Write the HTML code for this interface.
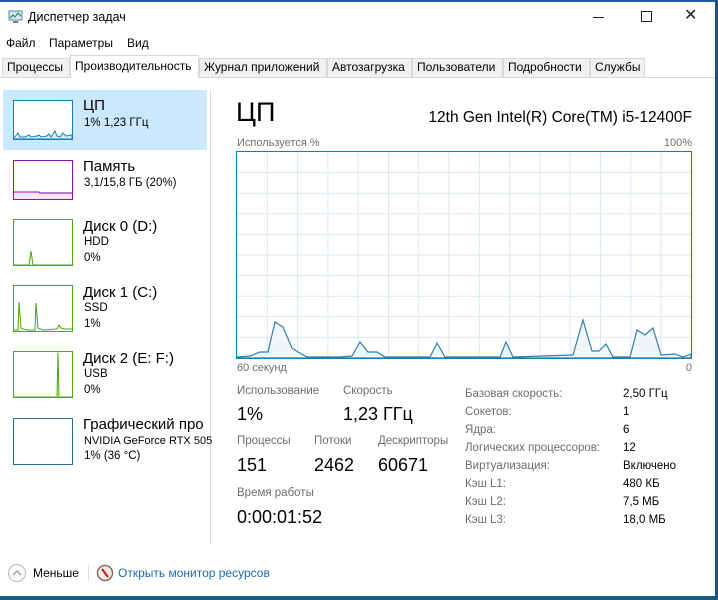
<!DOCTYPE html>
<html><head><meta charset="utf-8"><style>
*{margin:0;padding:0;box-sizing:border-box}
body{width:718px;height:600px;position:relative;background:#fff;font-family:"Liberation Sans","DejaVu Sans",sans-serif;color:#000;overflow:hidden}
.a{position:absolute;white-space:nowrap}
.g{color:#6d6d6d;font-size:11.5px}
.v{font-size:18px}
.tab{position:absolute;top:58px;height:19px;border:1px solid #d9d9d9;border-bottom:none;background:#f0f0f0;font-size:12px;line-height:17px;padding-left:4px}
.th{position:absolute;left:13px;width:60px;background:#fff}
.nm{position:absolute;left:83px;font-size:15px}
.sb{position:absolute;left:84px;font-size:11.5px}
</style></head><body>
<div class="a" style="left:0;top:0;width:718px;height:2px;background:#1f5d9a"></div>
<div class="a" style="left:715px;top:0;width:3px;height:600px;background:#1f4f86"></div>
<div class="a" style="left:0;top:596px;width:718px;height:4px;background:#1a5a7e"></div>
<svg class="a" style="left:8px;top:10px" width="15" height="14"><rect x="1" y="1" width="13" height="9" fill="#cfe6f6" stroke="#5b8db8"/><polyline points="2,8 5,5 7,7 10,3 13,6" fill="none" stroke="#2d7a2d"/><rect x="5" y="11" width="5" height="2" fill="#777"/></svg>
<div class="a" style="left:28px;top:10px;font-size:12.5px">Диспетчер задач</div>
<div class="a" style="left:593px;top:17px;width:11px;height:1px;background:#222"></div>
<div class="a" style="left:641px;top:11px;width:11px;height:11px;border:1px solid #222"></div>
<div class="a" style="left:684px;top:5px;font-size:16px;color:#222">✕</div>
<div class="a" style="left:6px;top:36px;font-size:12px">Файл</div>
<div class="a" style="left:49px;top:36px;font-size:12px">Параметры</div>
<div class="a" style="left:127px;top:36px;font-size:12px">Вид</div>
<div class="a" style="left:0;top:77px;width:715px;height:1px;background:#d9d9d9"></div>
<div class="tab" style="left:2px;width:68px">Процессы</div>
<div class="tab" style="left:70px;width:129px;top:55px;height:23px;background:#fff;line-height:21px">Производительность</div>
<div class="tab" style="left:199px;width:128px">Журнал приложений</div>
<div class="tab" style="left:327px;width:85px">Автозагрузка</div>
<div class="tab" style="left:412px;width:91px">Пользователи</div>
<div class="tab" style="left:503px;width:87px">Подробности</div>
<div class="tab" style="left:590px;width:55px">Службы</div>

<div class="a" style="left:3px;top:90px;width:204px;height:60px;background:#cce8ff"></div>
<div class="a" style="left:210px;top:90px;width:1px;height:455px;background:#dcdcdc"></div>
<svg class="th" style="top:100px" width="60" height="40"><rect x=".5" y=".5" width="59" height="39" fill="#fff" stroke="#117dbb"/><polyline points="1,38 5,33 7,37 12,37 16,35 18,37 24,36 26,35 28,37 34,36 36,34 38,37 42,31 44,36 47,37 50,33 53,36 59,35 59,39 1,39" fill="#e0edf6" stroke="#117dbb"/></svg>
<div class="nm" style="top:97px">ЦП</div>
<div class="sb" style="top:117px">1% 1,23 ГГц</div>
<svg class="th" style="top:160px" width="60" height="40"><rect x=".5" y=".5" width="59" height="39" fill="#fff" stroke="#8b12ae"/><rect x="1" y="32" width="58" height="7" fill="#f4e6f8"/><polyline points="1,32 26,32 27,33 59,33" fill="none" stroke="#8b12ae"/></svg>
<div class="nm" style="top:158px">Память</div>
<div class="sb" style="top:177px">3,1/15,8 ГБ (20%)</div>
<svg class="th" style="top:219px" width="60" height="47"><rect x=".5" y=".5" width="59" height="46" fill="#fff" stroke="#4da60c"/><polyline points="1,46 16,46 18,32 20,46 59,46" fill="#eff7e7" stroke="#4da60c"/></svg>
<div class="nm" style="top:218px">Диск 0 (D:)</div>
<div class="sb" style="top:236px">HDD</div><div class="sb" style="top:252px">0%</div>
<svg class="th" style="top:285px" width="60" height="47"><rect x=".5" y=".5" width="59" height="46" fill="#fff" stroke="#4da60c"/><polyline points="1,45 5,45 6,17 8,43 10,44 14,45 16,45 22,45 23,18 25,43 30,45 44,44 46,40 48,43 52,44 59,44" fill="#eff7e7" stroke="#4da60c"/></svg>
<div class="nm" style="top:284px">Диск 1 (C:)</div>
<div class="sb" style="top:302px">SSD</div><div class="sb" style="top:318px">1%</div>
<svg class="th" style="top:351px" width="60" height="47"><rect x=".5" y=".5" width="59" height="46" fill="#fff" stroke="#4da60c"/><polyline points="1,46 44,46 45,2 46,46 59,46" fill="#eff7e7" stroke="#4da60c"/></svg>
<div class="nm" style="top:350px">Диск 2 (E: F:)</div>
<div class="sb" style="top:368px">USB</div><div class="sb" style="top:384px">0%</div>
<svg class="th" style="top:418px" width="60" height="47"><rect x=".5" y=".5" width="59" height="46" fill="#fff" stroke="#2a6f8f"/></svg>
<div class="nm" style="top:416px">Графический про</div>
<div class="sb" style="top:435px;font-size:11px">NVIDIA GeForce RTX 505</div><div class="sb" style="top:450px">1% (36 °C)</div>

<div class="a" style="left:236px;top:97px;font-size:27px">ЦП</div>
<div class="a" style="right:26px;top:109px;font-size:15.5px">12th Gen Intel(R) Core(TM) i5-12400F</div>
<div class="a g" style="left:237px;top:137px;font-size:11px">Используется %</div>
<div class="a g" style="right:26px;top:137px;font-size:11px">100%</div>
<svg class="a" style="left:236px;top:151px" width="457" height="209">
<g stroke="#d9eaf4" stroke-width="1">
<line x1="31.3" y1="1" x2="31.3" y2="207"/><line x1="61.6" y1="1" x2="61.6" y2="207"/><line x1="91.9" y1="1" x2="91.9" y2="207"/><line x1="122.2" y1="1" x2="122.2" y2="207"/><line x1="152.5" y1="1" x2="152.5" y2="207"/><line x1="182.7" y1="1" x2="182.7" y2="207"/><line x1="213" y1="1" x2="213" y2="207"/><line x1="243.3" y1="1" x2="243.3" y2="207"/><line x1="273.6" y1="1" x2="273.6" y2="207"/><line x1="303.9" y1="1" x2="303.9" y2="207"/><line x1="334.2" y1="1" x2="334.2" y2="207"/><line x1="364.5" y1="1" x2="364.5" y2="207"/><line x1="394.8" y1="1" x2="394.8" y2="207"/><line x1="425.1" y1="1" x2="425.1" y2="207"/>
<line x1="1" y1="21.6" x2="455" y2="21.6"/><line x1="1" y1="42.2" x2="455" y2="42.2"/><line x1="1" y1="62.8" x2="455" y2="62.8"/><line x1="1" y1="83.4" x2="455" y2="83.4"/><line x1="1" y1="104" x2="455" y2="104"/><line x1="1" y1="124.6" x2="455" y2="124.6"/><line x1="1" y1="145.2" x2="455" y2="145.2"/><line x1="1" y1="165.8" x2="455" y2="165.8"/><line x1="1" y1="186.4" x2="455" y2="186.4"/>
</g>
<g transform="translate(-236,-151)">
<polyline points="237,357 250,356 260,352 268,352 275,322 283,327 292,348 298,352 307,357 320,357 340,357 352,356 360,342 368,352 377,352 385,357 430,357 437,343 445,357 500,357 506,342 513,357 573,355 583,320 592,351 599,351 606,344 613,357 630,357 637,330 645,335 653,328 661,355 675,354 683,357 691,354 691,358 237,358" fill="#f1f6fa" stroke="#2f7fa7" stroke-width="1.2"/>
</g>
<rect x=".5" y=".5" width="455" height="207" fill="none" stroke="#117dbb"/>
</svg>
<div class="a g" style="left:237px;top:362px;font-size:11px">60 секунд</div>
<div class="a g" style="right:26px;top:362px;font-size:11px">0</div>

<div class="a g" style="left:237px;top:385px">Использование</div>
<div class="a g" style="left:343px;top:385px">Скорость</div>
<div class="a v" style="left:237px;top:404px">1%</div>
<div class="a v" style="left:343px;top:404px">1,23 ГГц</div>
<div class="a g" style="left:237px;top:435px">Процессы</div>
<div class="a g" style="left:314px;top:435px">Потоки</div>
<div class="a g" style="left:378px;top:435px">Дескрипторы</div>
<div class="a v" style="left:237px;top:455px">151</div>
<div class="a v" style="left:314px;top:455px">2462</div>
<div class="a v" style="left:378px;top:455px">60671</div>
<div class="a g" style="left:237px;top:487px">Время работы</div>
<div class="a v" style="left:237px;top:507px">0:00:01:52</div>

<div class="a g" style="left:465px;top:385px;line-height:18px;font-size:11.5px">Базовая скорость:<br>Сокетов:<br>Ядра:<br>Логических процессоров:<br>Виртуализация:<br>Кэш L1:<br>Кэш L2:<br>Кэш L3:</div>
<div class="a" style="left:623px;top:385px;line-height:18px;font-size:11.5px">2,50 ГГц<br>1<br>6<br>12<br>Включено<br>480 КБ<br>7,5 МБ<br>18,0 МБ</div>

<svg class="a" style="left:7px;top:563px" width="20" height="20"><circle cx="10" cy="10" r="8.5" fill="#fafafa" stroke="#b8b8b8"/><polyline points="6,12 10,8 14,12" fill="none" stroke="#a0a0a0" stroke-width="1.5"/></svg>
<div class="a" style="left:33px;top:566px;font-size:12px">Меньше</div>
<div class="a" style="left:88px;top:565px;width:1px;height:16px;background:#ddd"></div>
<svg class="a" style="left:96px;top:564px" width="18" height="18"><circle cx="9" cy="9" r="7.5" fill="#f6efe6" stroke="#8a6a5a" stroke-width="1.5"/><line x1="6" y1="5" x2="12" y2="13" stroke="#c21a1a" stroke-width="2"/></svg>
<div class="a" style="left:118px;top:566px;font-size:12px;color:#1e6bb0">Открыть монитор ресурсов</div>
</body></html>
